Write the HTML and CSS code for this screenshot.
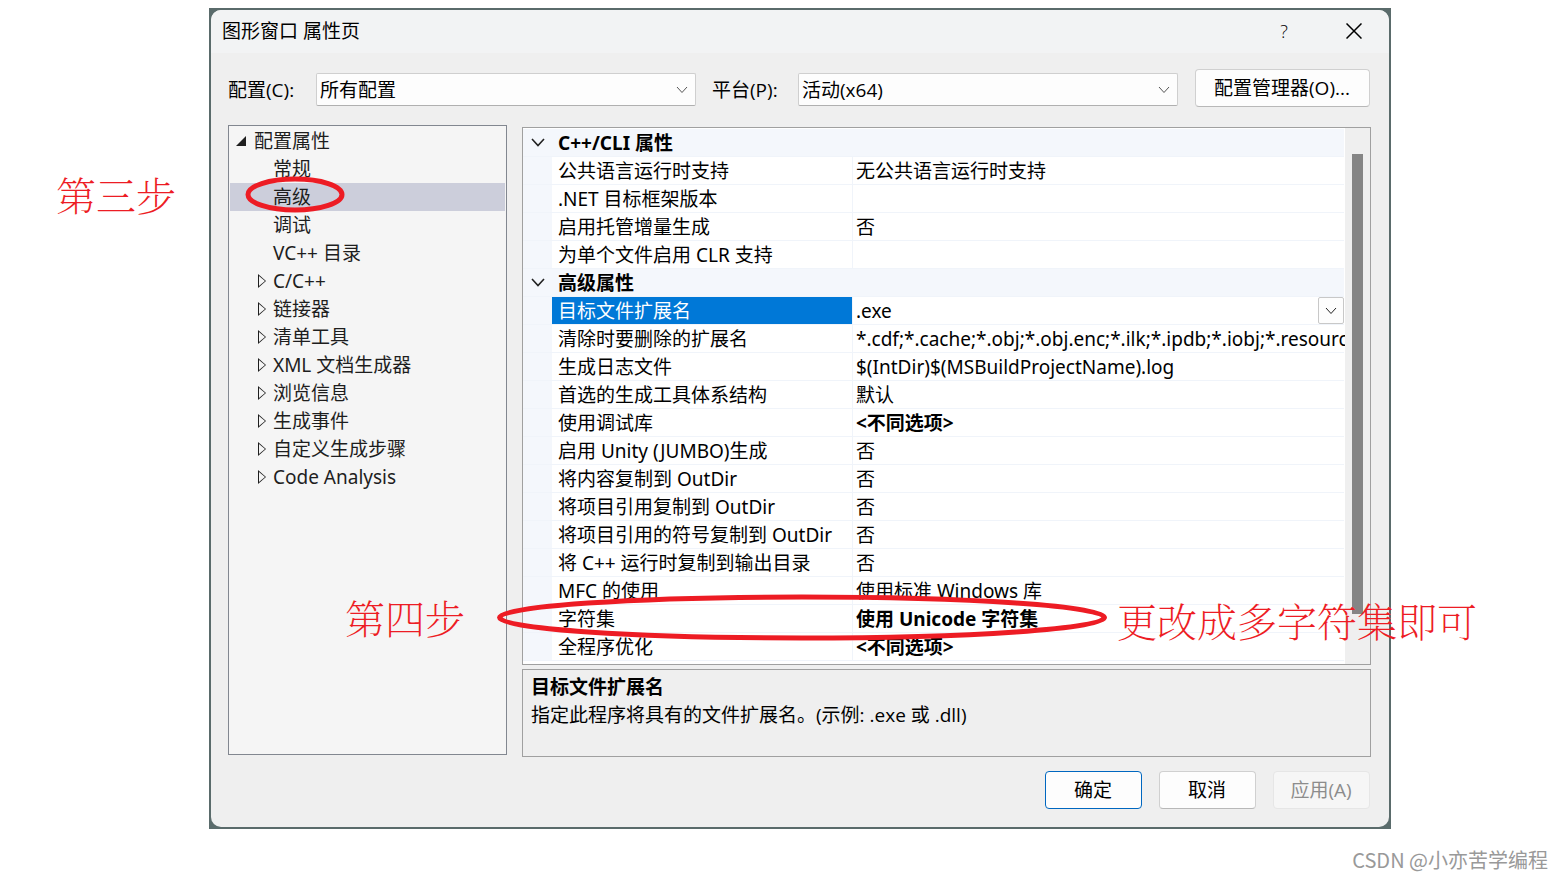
FILE: index.html
```html
<!DOCTYPE html>
<html lang="zh-CN">
<head>
    <meta charset="UTF-8">
    <meta name="viewport" content="width=device-width, initial-scale=1.0">
    <title>图形窗口 属性页</title>
    <link rel="stylesheet" href="styles.css">
</head>
<body>
    <main class="frame">
        <div class="window">
            <header class="titlebar">
                <h1>图形窗口 属性页</h1>
                <button class="title-btn" type="button" aria-label="帮助">?</button>
                <button class="title-btn" type="button" aria-label="关闭">
                    <svg width="16" height="16" viewBox="0 0 16 16"><path d="M0.5 0.5L15.5 15.5M15.5 0.5L0.5 15.5" /></svg>
                </button>
            </header>

            <div class="toolbar">
                <label class="config-label" for="config">配置(C):</label>
                <div class="select-box">
                    <select id="config"><option>所有配置</option></select>
                    <svg class="chevron" width="12" height="8" viewBox="0 0 12 8"><path d="M1 1L6 6.5L11 1" /></svg>
                </div>
                <label class="platform-label" for="platform">平台(P):</label>
                <div class="select-box">
                    <select id="platform"><option>活动(x64)</option></select>
                    <svg class="chevron" width="12" height="8" viewBox="0 0 12 8"><path d="M1 1L6 6.5L11 1" /></svg>
                </div>
                <button class="btn manager-btn" type="button">配置管理器(O)...</button>
            </div>

            <div class="content">
                <nav class="tree">
                    <div class="tree-root"><svg width="10" height="10" viewBox="0 0 10 10"><path d="M10 0V10H0Z" /></svg>配置属性</div>
                    <ul>
                        <li>常规</li>
                        <li class="selected">高级</li>
                        <li>调试</li>
                        <li>VC++ 目录</li>
                        <li class="closed">C/C++</li>
                        <li class="closed">链接器</li>
                        <li class="closed">清单工具</li>
                        <li class="closed">XML 文档生成器</li>
                        <li class="closed">浏览信息</li>
                        <li class="closed">生成事件</li>
                        <li class="closed">自定义生成步骤</li>
                        <li class="closed">Code Analysis</li>
                    </ul>
                </nav>

                <div class="details">
                    <div class="grid">
                        <table>
                            <colgroup><col class="col-gutter"><col class="col-name"><col></colgroup>
                            <tbody>
                                <tr class="group"><td><svg width="14" height="9" viewBox="0 0 14 9"><path d="M1 1L7 7.5L13 1" /></svg></td><th colspan="2">C++/CLI 属性</th></tr>
                                <tr><td></td><td>公共语言运行时支持</td><td>无公共语言运行时支持</td></tr>
                                <tr><td></td><td>.NET 目标框架版本</td><td></td></tr>
                                <tr><td></td><td>启用托管增量生成</td><td>否</td></tr>
                                <tr><td></td><td>为单个文件启用 CLR 支持</td><td></td></tr>
                                <tr class="group"><td><svg width="14" height="9" viewBox="0 0 14 9"><path d="M1 1L7 7.5L13 1" /></svg></td><th colspan="2">高级属性</th></tr>
                                <tr class="active"><td></td><td>目标文件扩展名</td><td><div class="editor"><span>.exe</span><button class="drop-btn" type="button" aria-label="展开"><svg width="12" height="8" viewBox="0 0 12 8"><path d="M1 1L6 6.5L11 1" /></svg></button></div></td></tr>
                                <tr><td></td><td>清除时要删除的扩展名</td><td>*.cdf;*.cache;*.obj;*.obj.enc;*.ilk;*.ipdb;*.iobj;*.resourc</td></tr>
                                <tr><td></td><td>生成日志文件</td><td>$(IntDir)$(MSBuildProjectName).log</td></tr>
                                <tr><td></td><td>首选的生成工具体系结构</td><td>默认</td></tr>
                                <tr><td></td><td>使用调试库</td><td class="changed">&lt;不同选项&gt;</td></tr>
                                <tr><td></td><td>启用 Unity (JUMBO)生成</td><td>否</td></tr>
                                <tr><td></td><td>将内容复制到 OutDir</td><td>否</td></tr>
                                <tr><td></td><td>将项目引用复制到 OutDir</td><td>否</td></tr>
                                <tr><td></td><td>将项目引用的符号复制到 OutDir</td><td>否</td></tr>
                                <tr><td></td><td>将 C++ 运行时复制到输出目录</td><td>否</td></tr>
                                <tr><td></td><td>MFC 的使用</td><td>使用标准 Windows 库</td></tr>
                                <tr><td></td><td>字符集</td><td class="changed">使用 Unicode 字符集</td></tr>
                                <tr><td></td><td>全程序优化</td><td class="changed">&lt;不同选项&gt;</td></tr>
                            </tbody>
                        </table>
                        <div class="scrollbar"><div class="thumb"></div></div>
                    </div>
                    <div class="description">
                        <h2>目标文件扩展名</h2>
                        <p>指定此程序将具有的文件扩展名。(示例: .exe 或 .dll)</p>
                    </div>
                </div>
            </div>

            <div class="actions">
                <button class="btn primary" type="button">确定</button>
                <button class="btn" type="button">取消</button>
                <button class="btn" type="button" disabled>应用(A)</button>
            </div>
        </div>

        <!-- red tutorial marks drawn over the dialog -->
        <span class="note note-step3">第三步</span>
        <span class="note note-step4">第四步</span>
        <span class="note note-change">更改成多字符集即可</span>
        <svg class="ring ring-advanced" width="100" height="37" viewBox="0 0 100 37"><ellipse cx="50" cy="18.5" rx="47" ry="15.5" /></svg>
        <svg class="ring ring-charset" width="612" height="47" viewBox="0 0 612 47"><ellipse cx="306" cy="23.5" rx="302.5" ry="20.5" /></svg>
    </main>

    <footer class="watermark">CSDN @小亦苦学编程</footer>
</body>
</html>
```
FILE: styles.css
```css
* {
    box-sizing: border-box;
}

body {
    margin: 0;
    background-color: #ffffff;
    color: #000000;
    font-family: "Noto Sans", "Noto Sans CJK SC", sans-serif;
    font-size: 19px;
    line-height: 28px;
}

svg {
    fill: none;
    stroke: #222222;
}

button, select {
    font-family: "Open Sans", "Noto Sans CJK SC", sans-serif;
    font-size: 19px;
    color: #000000;
}

.frame {
    position: relative;
    margin: 8px 172px 0 209px;
    padding: 2px;
    background-color: #5a6b6b;
}

.window {
    background-color: #efefef;
    border-radius: 10px;
    overflow: hidden;
}

.titlebar {
    display: flex;
    align-items: center;
    height: 43px;
    padding: 0 0 2px 11px;
    background-color: #f2f3f4;
}

.titlebar h1 {
    flex: 1;
    margin: 0;
    font-size: 19px;
    font-weight: 400;
}

.title-btn {
    display: flex;
    align-items: center;
    justify-content: center;
    width: 70px;
    height: 40px;
    padding: 0;
    border: none;
    background: none;
    font-size: 18px;
    font-weight: 300;
}

.title-btn svg {
    stroke: #000000;
    stroke-width: 1.5;
}

.toolbar {
    display: flex;
    align-items: center;
    padding: 16px 19px 18px 17px;
    font-family: "Open Sans", "Noto Sans CJK SC", sans-serif;
}

.toolbar label {
    margin-top: 3px;
}

.config-label {
    width: 88px;
}

.platform-label {
    width: 86px;
    margin-left: 16px;
}

.select-box {
    position: relative;
    flex: 1;
    height: 33px;
    margin-top: 3px;
}

.select-box select {
    width: 100%;
    height: 33px;
    padding: 1px 3px 0;
    border: 1px solid #cfcfcf;
    border-bottom-color: #b0b0b0;
    border-radius: 2px;
    background-color: #fdfdfd;
    appearance: none;
}

.chevron {
    position: absolute;
    right: 8px;
    top: 13px;
    stroke: #555555;
}

.btn {
    width: 97px;
    height: 38px;
    padding: 0 1px 2px 0;
    border: 1px solid #d0d0d0;
    border-bottom-color: #b8b8b8;
    border-radius: 4px;
    background-color: #fdfdfd;
}

.btn.primary {
    border-color: #0067c0;
}

.btn:disabled {
    border-color: #e6e6e6;
    background-color: #f6f6f6;
    color: #8c8c8c;
}

.manager-btn {
    width: 175px;
    margin-left: 17px;
}

.content {
    display: flex;
    gap: 15px;
    padding: 0 18px 0 17px;
}

.tree {
    width: 279px;
    height: 630px;
    padding: 1px;
    border: 1px solid #828790;
    background-color: #f5f5f5;
    color: #1e1e1e;
}

.tree-root {
    display: flex;
    align-items: center;
    gap: 8px;
    padding-left: 6px;
}

.tree-root svg {
    fill: #1e1e1e;
    stroke: none;
}

.tree ul {
    margin: 0;
    padding: 0;
    list-style: none;
}

.tree li {
    position: relative;
    padding-left: 43px;
}

.tree li.selected {
    background-color: #cccedb;
}

.tree li.closed::before,
.tree li.closed::after {
    content: "";
    position: absolute;
    left: 28px;
    top: 7px;
    width: 8px;
    height: 14px;
    background-color: #1e1e1e;
    clip-path: polygon(0 0, 100% 50%, 0 100%);
}

.tree li.closed::after {
    left: 29px;
    top: 9px;
    width: 6px;
    height: 10px;
    background-color: #f5f5f5;
}

.details {
    display: flex;
    flex: 1;
    flex-direction: column;
    gap: 4px;
    min-width: 0;
    margin-top: 2px;
}

.grid {
    display: flex;
    height: 538px;
    border: 1px solid #a0a0a0;
    background-color: #ffffff;
    overflow: hidden;
}

.grid table {
    flex: 1;
    align-self: flex-start;
    width: 0;
    margin-top: 1px;
    margin-right: 1px;
    border-spacing: 0;
    table-layout: fixed;
}

.col-gutter {
    width: 29px;
}

.col-name {
    width: 300px;
}

.grid td, .grid th {
    height: 28px;
    padding: 2px 0 0 6px;
    border-bottom: 1px solid #f0f4fa;
    line-height: 25px;
    text-align: left;
    white-space: nowrap;
}

.grid td:first-child {
    padding: 0 0 0 8px;
    background-color: #f4f7fc;
}

.grid td:last-child {
    padding-left: 3px;
    border-left: 1px solid #f0f4fa;
}

.grid .group th {
    background-color: #f4f7fc;
}

.grid .group svg {
    display: block;
    stroke-width: 1.6;
}

.grid .active td:nth-child(2) {
    background-color: #0078d7;
    color: #ffffff;
}

.grid .active td:last-child {
    padding-top: 0;
}

.grid .changed {
    font-weight: 700;
}

.editor {
    display: flex;
    align-items: center;
    justify-content: space-between;
    height: 27px;
}

.editor span {
    padding-top: 2px;
}

.drop-btn {
    display: flex;
    align-items: center;
    justify-content: center;
    width: 26px;
    height: 27px;
    padding: 0;
    border: 1px solid #c8c8c8;
    border-radius: 2px;
    background-color: #fdfdfd;
}

.scrollbar {
    width: 25px;
    padding: 26px 7px 0;
    background-color: #efefef;
}

.thumb {
    height: 460px;
    background-color: #858585;
}

.description {
    height: 88px;
    padding: 3px 8px;
    border: 1px solid #a0a0a0;
}

.description h2, .description p {
    margin: 0;
    font-size: 19px;
}

.description p {
    font-family: "Open Sans", "Noto Sans CJK SC", sans-serif;
}

.actions {
    display: flex;
    justify-content: flex-end;
    gap: 17px;
    padding: 14px 19px 18px;
}

.note {
    position: absolute;
    color: #ed1c24;
    font-family: "Noto Serif CJK SC", "Noto Sans CJK SC", serif;
    font-size: 40px;
    font-weight: 100;
    line-height: 40px;
    white-space: nowrap;
}

.note-step3 {
    left: -153px;
    top: 166px;
}

.note-step4 {
    left: 136px;
    top: 589px;
}

.note-change {
    left: 908px;
    top: 592px;
}

.ring {
    position: absolute;
    stroke: #ed1c24;
    stroke-width: 5;
}

.ring-advanced {
    left: 36px;
    top: 168px;
}

.ring-charset {
    left: 287px;
    top: 586px;
}

.watermark {
    margin-top: 17px;
    padding-right: 15px;
    color: #999999;
    font-family: "Noto Sans CJK SC", sans-serif;
    font-size: 20px;
    text-align: right;
}
```
